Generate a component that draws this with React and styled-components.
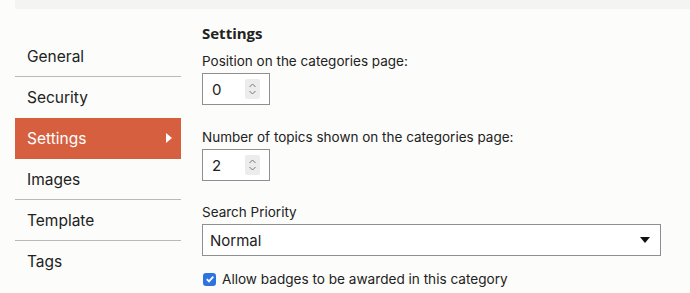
import styled, { createGlobalStyle } from "styled-components";

const GlobalStyle = createGlobalStyle`
  body {
    margin: 0;
    background: #fcfcfa;
    font-family: Inter, "Liberation Sans", sans-serif;
    color: #222;
  }
`;

const Page = styled.div`
  width: 690px;
  height: 293px;
  overflow: hidden;
`;

const TopBand = styled.div`
  height: 9px;
  margin-left: 15px;
  background: #f4f4f2;
`;

const Body = styled.div`
  display: flex;
  padding-left: 15px;
`;

const Sidebar = styled.ul`
  list-style: none;
  margin: 27px 0 0;
  padding: 0;
  width: 166px;
`;

const NavItem = styled.li`
  position: relative;
  height: 40px;
  display: flex;
  align-items: center;
  padding-left: 12px;
  font-size: 15.5px;
  border-bottom: 1px solid ${(p) => (p.$last || p.$beforeActive || p.$active ? "transparent" : "#b9b9b9")};
  background: ${(p) => (p.$active ? "#d55f3f" : "transparent")};
  color: ${(p) => (p.$active ? "#fff" : "#222")};
`;

const Arrow = styled.span`
  position: absolute;
  right: 9px;
  top: 50%;
  margin-top: -5px;
  border-top: 5px solid transparent;
  border-bottom: 5px solid transparent;
  border-left: 6px solid #fff;
`;

const Content = styled.div`
  margin-left: 21px;
  padding-top: 14px;
  flex: 1;
  font-size: 13.5px;
`;

const Heading = styled.h3`
  margin: 0 0 8px;
  font-family: "Open Sans", "Liberation Sans", sans-serif;
  font-size: 15px;
  line-height: 20px;
  font-weight: 700;
`;

const Field = styled.div`
  margin-bottom: ${(p) => p.$gap || 0}px;
`;

const Label = styled.div`
  font-size: 13.5px;
  line-height: 20px;
  margin-bottom: 2px;
`;

const NumberBox = styled.div`
  width: 68px;
  height: 32px;
  box-sizing: border-box;
  border: 1px solid #8f8f8f;
  background: #fff;
  display: flex;
  align-items: center;
  justify-content: space-between;
  padding: 0 9px 0 9px;
  font-size: 15px;
`;

const Spinner = styled.span`
  width: 15px;
  height: 20px;
  background: #ececec;
  border-radius: 2px;
  display: flex;
  align-items: center;
  justify-content: center;
`;

const Select = styled.div`
  width: 459px;
  height: 32px;
  box-sizing: border-box;
  border: 1px solid #8f8f8f;
  background: #fff;
  display: flex;
  align-items: center;
  justify-content: space-between;
  padding: 0 10px 0 7px;
  font-size: 15px;
`;

const Caret = styled.span`
  border-left: 5px solid transparent;
  border-right: 5px solid transparent;
  border-top: 6px solid #111;
`;

const CheckRow = styled.label`
  display: flex;
  align-items: center;
  gap: 6px;
  margin-top: 13px;
  font-size: 13.6px;
  line-height: 20px;
`;

const CheckBox = styled.span`
  width: 13px;
  height: 13px;
  border-radius: 3px;
  background: #2e74e0;
  display: flex;
  align-items: center;
  justify-content: center;
  margin-left: 1px;
`;

const navItems = ["General", "Security", "Settings", "Images", "Template", "Tags"];
const activeIndex = 2;

const SpinIcon = () => (
  <Spinner>
    <svg width="9" height="14" viewBox="0 0 9 14" fill="none" stroke="#777" strokeWidth="1">
      <path d="M1.5 5 L4.5 2 L7.5 5" />
      <path d="M1.5 9 L4.5 12 L7.5 9" />
    </svg>
  </Spinner>
);

export default function App() {
  return (
    <Page>
      <GlobalStyle />
      <TopBand />
      <Body>
        <Sidebar>
          {navItems.map((name, i) => (
            <NavItem
              key={name}
              $active={i === activeIndex}
              $beforeActive={i === activeIndex - 1}
              $last={i === navItems.length - 1}
            >
              {name}
              {i === activeIndex && <Arrow />}
            </NavItem>
          ))}
        </Sidebar>
        <Content>
          <Heading>Settings</Heading>
          <Field $gap={22}>
            <Label>Position on the categories page:</Label>
            <NumberBox>
              0
              <SpinIcon />
            </NumberBox>
          </Field>
          <Field $gap={21}>
            <Label>Number of topics shown on the categories page:</Label>
            <NumberBox>
              2
              <SpinIcon />
            </NumberBox>
          </Field>
          <Field>
            <Label>Search Priority</Label>
            <Select>
              Normal
              <Caret />
            </Select>
          </Field>
          <CheckRow>
            <CheckBox>
              <svg width="10" height="10" viewBox="0 0 10 10" fill="none" stroke="#fff" strokeWidth="1.8">
                <path d="M1.8 5.2 L4 7.4 L8.3 2.6" />
              </svg>
            </CheckBox>
            Allow badges to be awarded in this category
          </CheckRow>
        </Content>
      </Body>
    </Page>
  );
}
